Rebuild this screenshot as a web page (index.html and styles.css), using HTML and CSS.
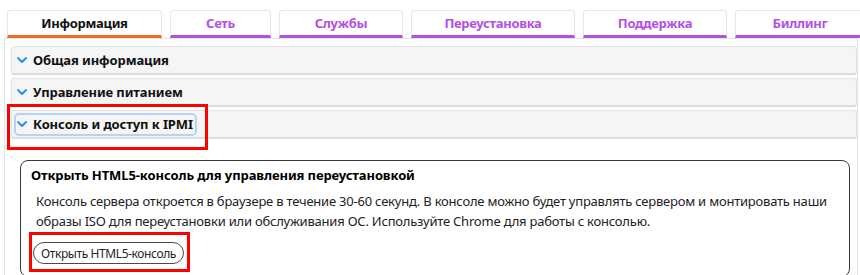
FILE: index.html
```html
<!DOCTYPE html>
<html lang="ru">
<head>
<meta charset="utf-8">
<title>Сервер</title>
<link rel="stylesheet" href="styles.css">
</head>
<body>
<div class="page">
  <nav class="tabs">
    <div class="tab tab-active tab-info">Информация</div>
    <div class="tab tab-net">Сеть</div>
    <div class="tab tab-svc">Службы</div>
    <div class="tab tab-reinstall">Переустановка</div>
    <div class="tab tab-support">Поддержка</div>
    <div class="tab tab-billing">Биллинг</div>
  </nav>
  <div class="panel">
    <div class="acc-item">
      <div class="acc-header">
        <span class="acc-toggle"><svg class="chev" width="10" height="6" viewBox="0 0 10 6"><polyline points="1,1 5,5 9,1"/></svg>Общая информация</span>
      </div>
    </div>
    <div class="acc-item">
      <div class="acc-header">
        <span class="acc-toggle"><svg class="chev" width="10" height="6" viewBox="0 0 10 6"><polyline points="1,1 5,5 9,1"/></svg>Управление питанием</span>
      </div>
    </div>
    <div class="acc-item">
      <div class="acc-header">
        <span class="acc-toggle focused"><svg class="chev" width="10" height="6" viewBox="0 0 10 6"><polyline points="1,1 5,5 9,1"/></svg>Консоль и доступ к IPMI</span>
        <div class="mark mark-header"></div>
      </div>
      <div class="acc-body">
        <div class="card">
          <div class="card-title">Открыть HTML5-консоль для управления переустановкой</div>
          <p class="card-text">Консоль сервера откроется в браузере в течение 30-60 секунд. В консоле можно будет управлять сервером и монтировать наши образы ISO для переустановки или обслуживания ОС. Используйте Chrome для работы с консолью.</p>
          <div class="btn-wrap">
            <button class="btn-pill" type="button">Открыть HTML5-консоль</button>
            <div class="mark mark-btn"></div>
          </div>
        </div>
      </div>
    </div>
  </div>
</div>
</body>
</html>
```
FILE: styles.css
```css
html, body {
  margin: 0;
  padding: 0;
  background: #ffffff;
}

body {
  font-family: "Noto Sans", "Open Sans", sans-serif;
  color: #212529;
  width: 860px;
  height: 275px;
  overflow: hidden;
}

.page {
  padding: 10px 0 0 4px;
}

.tabs {
  display: flex;
  gap: 8px;
  margin-left: 3px;
  height: 28px;
  overflow: hidden;
}

.tab {
  flex: none;
  box-sizing: border-box;
  height: 28px;
  border: 1px solid #e6e6e6;
  border-bottom: 3px solid #b350e4;
  border-radius: 4px 4px 0 0;
  text-align: center;
  font-weight: 700;
  font-size: 13px;
  letter-spacing: -0.3px;
  line-height: 25px;
  color: #b350e4;
  background: #fff;
}

.tab-active {
  color: #111;
  border-bottom-color: #f26a2c;
}

.tab-info { width: 155px; }
.tab-net { width: 101px; }
.tab-svc { width: 124px; }
.tab-reinstall { width: 164px; }
.tab-support { width: 144px; }
.tab-billing { width: 130px; }

.panel {
  width: 854px;
  box-sizing: border-box;
  border: 1px solid #e2e2e2;
  border-bottom: none;
  padding: 7px 0 0 6px;
}

.acc-item + .acc-item {
  margin-top: 3px;
}

.acc-header {
  position: relative;
  height: 29px;
  box-sizing: border-box;
  background: #f5f5f5;
  border: 1px solid #e4e4e4;
  border-bottom: 2px solid #dcdcdc;
  border-radius: 3px;
  display: flex;
  align-items: center;
  padding-left: 2px;
}

.acc-toggle {
  display: flex;
  align-items: center;
  gap: 6px;
  box-sizing: border-box;
  height: 23px;
  padding: 0 2px 0 1px;
  border: 2px solid transparent;
  border-radius: 5px;
  font-weight: 700;
  font-size: 13px;
  letter-spacing: -0.1px;
  color: #111;
}

.acc-toggle.focused {
  border-color: #b3d4f7;
}

.chev {
  flex: none;
  fill: none;
  stroke: #1e8ff0;
  stroke-width: 1.8;
  stroke-linecap: round;
  stroke-linejoin: round;
}

.acc-body {
  padding: 21px 7px 0 9px;
}

.card {
  border: 1px solid #343a40;
  border-radius: 8px;
  padding: 5px 10px 12px;
}

.card-title {
  font-weight: 700;
  font-size: 13px;
  letter-spacing: -0.1px;
  line-height: 18px;
  color: #000;
}

.card-text {
  margin: 8px 0 0 5px;
  font-size: 13px;
  letter-spacing: -0.22px;
  line-height: 19.5px;
  color: #1e2125;
}

.btn-wrap {
  position: relative;
  display: inline-block;
  margin: 11px 0 0 2px;
}

.btn-pill {
  display: block;
  height: 22px;
  padding: 0 7px;
  border: 1px solid #4a4a4a;
  border-radius: 11px;
  background: #fff;
  font-family: "Noto Sans", "Open Sans", sans-serif;
  font-size: 12px;
  letter-spacing: -0.4px;
  color: #212529;
}

.mark {
  position: absolute;
  box-sizing: border-box;
  border: 3px solid #ff0000;
  pointer-events: none;
}

.mark-header {
  left: -5px;
  top: -7px;
  width: 201px;
  height: 46px;
}

.mark-btn {
  left: -4px;
  top: -10px;
  width: 161px;
  height: 40px;
}
```
